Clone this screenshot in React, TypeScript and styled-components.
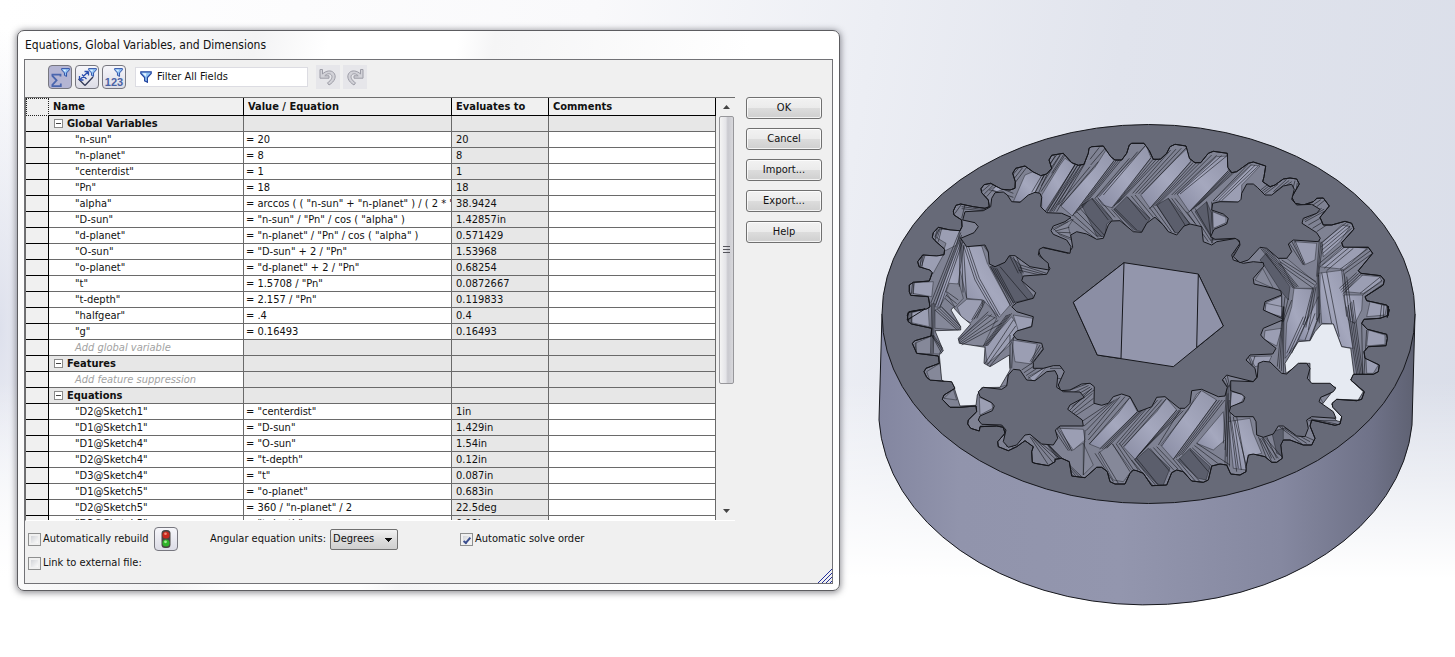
import React from 'react';
import styled, { createGlobalStyle, css } from 'styled-components';

const GlobalStyle = createGlobalStyle`
  *, *::before, *::after { box-sizing: border-box; }
  body {
    margin: 0;
    font-family: "DejaVu Sans Condensed", "Noto Sans", sans-serif;
    font-size: 11px;
    line-height: 16px;
    color: #111;
  }
  button, input, select { font: inherit; color: inherit; margin: 0; }
`;

const Desktop = styled.main`
  display: flex;
  align-items: flex-start;
  min-height: 100vh;
  background:
    linear-gradient(to bottom, transparent 58%, #fff 88%),
    radial-gradient(ellipse 60px 300px at 0 50%, #dde0ec, transparent),
    linear-gradient(100deg, #fff 0%, #f9f9fb 38%, #eceef4 56%, #e1e4ed 72%, #dadee9 100%);
`;

const Dialog = styled.section`
  flex: 0 1 823px;
  min-width: 640px;
  margin: 30px 0 0 17px;
  padding: 0 6px 6px;
  border: 1px solid #5c5c60;
  border-radius: 7px;
  background: linear-gradient(100deg, #fff 0%, #f3f3f4 26%, #fff 34%, #fff 48%, #f5f5f6 52%, #fff 80%);
  box-shadow: 0 1px 6px 1px rgba(40, 40, 50, 0.5);
`;

const Title = styled.h1`
  margin: 0;
  padding: 6px 1px;
  font-size: 12px;
  line-height: 16px;
  font-weight: normal;
`;

const Frame = styled.div`
  border: 1px solid #727276;
  background: #f0f0f0;
  height: 525px;
  display: flex;
  flex-direction: column;
`;

const Toolbar = styled.div`
  display: flex;
  align-items: center;
  height: 37px;
  padding: 0 0 4px 23px;
`;

const ToolButton = styled.button<{ $pressed?: boolean }>`
  width: 24px;
  height: 24px;
  margin-right: 3px;
  padding: 0;
  border: 1px solid #77777f;
  border-radius: 4px;
  background: ${(p) => (p.$pressed ? '#b4b5d3' : 'linear-gradient(#f6f6fa, #dcdce6)')};
  display: grid;
  place-items: center;
`;

const HistoryButton = styled.button`
  width: 24px;
  height: 24px;
  margin-right: 3px;
  padding: 0;
  border: 0;
  background: #e6e6ea;
  display: grid;
  place-items: center;
`;

const FilterBox = styled.label`
  display: flex;
  align-items: center;
  gap: 5px;
  width: 173px;
  height: 20px;
  margin: 0 8px 0 6px;
  padding-left: 4px;
  border: 1px solid #dcdce2;
  background: #fff;
`;

const FilterInput = styled.input`
  flex: 1;
  min-width: 0;
  height: 18px;
  padding: 0;
  border: 0;
  background: transparent;
  outline: none;
  &::placeholder { color: #111; opacity: 1; }
`;

const Main = styled.div`
  display: flex;
  gap: 11px;
  padding-right: 10px;
`;

const TablePane = styled.div`
  flex: 1;
  min-width: 0;
  height: 424px;
  display: flex;
  overflow: hidden;
  border-top: 1px solid #6e6e6e;
  border-left: 1px solid #6e6e6e;
  border-bottom: 1px solid #fff;
`;

const TableClip = styled.div`
  flex: 1;
  min-width: 0;
  overflow: hidden;
`;

const Table = styled.table`
  width: 100%;
  table-layout: fixed;
  border-collapse: separate;
  border-spacing: 0;
  background: #fff;
`;

const cellBase = css`
  overflow: hidden;
  white-space: nowrap;
  text-align: left;
  border-right: 1px solid #6a6a6a;
  border-bottom: 1px solid #6a6a6a;
`;

const HeadCell = styled.th`
  ${cellBase}
  height: 18px;
  padding: 1px 4px 0;
  line-height: 16px;
  background: #f0f0f0;
  border-color: #000;
`;

const CornerCell = styled(HeadCell)`
  border: 1px dotted #222;
`;

const Gutter = styled.td`
  ${cellBase}
  padding: 0;
  background: #f0f0f0;
  border-color: #000;
`;

const Cell = styled.td<{ $kind?: 'name' | 'value' | 'result'; $shaded?: boolean; $hint?: boolean }>`
  ${cellBase}
  height: 16px;
  line-height: 15px;
  padding: 0 0 0 ${(p) => (p.$kind === 'name' ? 26 : p.$kind === 'value' ? 2 : 4)}px;
  background: ${(p) => (p.$shaded ? '#e7e7e7' : '#fff')};
  ${(p) => p.$hint && 'color: #a2a2a2; font-style: italic;'}
`;

const GroupCell = styled(Cell)`
  padding-left: 5px;
  font-weight: bold;
`;

const Collapse = styled.button`
  width: 9px;
  height: 9px;
  margin: 0 4px 0 0;
  padding: 0;
  vertical-align: 0;
  border: 1px solid #8a8a8a;
  background: linear-gradient(#444, #444) center / 5px 1px no-repeat #fff;
`;

const ScrollBar = styled.div`
  flex: 0 0 19px;
  display: flex;
  flex-direction: column;
  align-items: center;
  background: #f0f0f0;
  padding: 0 1px 0 2px;
`;

const ScrollArrow = styled.button`
  width: 100%;
  height: 18px;
  padding: 0;
  border: 0;
  background: transparent;
  display: grid;
  place-items: center;
`;

const ScrollThumb = styled.div`
  width: 15px;
  height: 268px;
  border: 1px solid #97979b;
  border-radius: 2px;
  background: linear-gradient(to right, #f4f4f4, #e4e4e8 45%, #c9c9cf 60%, #d8d8dc);
  display: grid;
  place-items: center;
`;

const ScrollSpace = styled.div`
  flex: 1;
`;

const Actions = styled.div`
  flex: 0 0 76px;
  display: flex;
  flex-direction: column;
  gap: 9px;
`;

const PushButton = styled.button`
  height: 22px;
  padding: 0;
  border: 1px solid #707070;
  border-radius: 3px;
  background: linear-gradient(#f2f2f2 0%, #ebebeb 48%, #dcdcdc 52%, #cfcfcf 100%);
  box-shadow: inset 0 0 0 1px rgba(255, 255, 255, 0.75);
`;

const Options = styled.div`
  flex: 1;
  display: grid;
  grid-template-columns: 126px 56px 250px 1fr auto;
  grid-template-rows: 24px 24px;
  align-items: center;
  padding: 6px 0 0 3px;
`;

const Check = styled.label`
  display: flex;
  align-items: center;
  gap: 2px;
  white-space: nowrap;
`;

const Tick = styled.input`
  appearance: none;
  width: 13px;
  height: 13px;
  border: 1px solid #8e8f8f;
  background: linear-gradient(135deg, #d2d4d8, #fafafa) content-box #f6f6f6;
  padding: 2px;
  display: grid;
  place-items: center;
  &:checked::after {
    content: "";
    width: 4px;
    height: 8px;
    border: solid #3c4f8f;
    border-width: 0 2px 2px 0;
    transform: rotate(40deg);
  }
`;

const Units = styled.label`
  display: flex;
  align-items: center;
  gap: 4px;
  white-space: nowrap;
`;

const UnitSelect = styled.select`
  appearance: none;
  width: 68px;
  height: 21px;
  padding: 0 2px;
  border: 1px solid #707070;
  border-radius: 2px;
  background:
    linear-gradient(135deg, #111 50%, transparent 50%) right 4px top 8px / 4px 4px no-repeat,
    linear-gradient(225deg, #111 50%, transparent 50%) right 8px top 8px / 4px 4px no-repeat,
    linear-gradient(#f2f2f2, #dcdcdc 52%, #cfcfcf);
`;

const Grip = styled.svg`
  grid-column: 5;
  grid-row: 2 / 4;
  display: block;
  align-self: end;
`;

const Viewport = styled.div`
  flex: 1;
  min-width: 300px;
`;

const Model = styled.svg`
  display: block;
  width: 100%;
  height: auto;
`;

/* ---------- table data ---------- */

type Line =
  | { group: string }
  | { hint: string }
  | { name: string; value: string; result: string };

const lines: Line[] = [
  { group: 'Global Variables' },
  { name: '"n-sun"', value: '= 20', result: '20' },
  { name: '"n-planet"', value: '= 8', result: '8' },
  { name: '"centerdist"', value: '= 1', result: '1' },
  { name: '"Pn"', value: '= 18', result: '18' },
  { name: '"alpha"', value: '= arccos ( ( "n-sun" + "n-planet" ) / ( 2 * "Pn" ) )', result: '38.9424' },
  { name: '"D-sun"', value: '= "n-sun" / "Pn" / cos ( "alpha" )', result: '1.42857in' },
  { name: '"d-planet"', value: '= "n-planet" / "Pn" / cos ( "alpha" )', result: '0.571429' },
  { name: '"O-sun"', value: '= "D-sun" + 2 / "Pn"', result: '1.53968' },
  { name: '"o-planet"', value: '= "d-planet" + 2 / "Pn"', result: '0.68254' },
  { name: '"t"', value: '= 1.5708 / "Pn"', result: '0.0872667' },
  { name: '"t-depth"', value: '= 2.157 / "Pn"', result: '0.119833' },
  { name: '"halfgear"', value: '= .4', result: '0.4' },
  { name: '"g"', value: '= 0.16493', result: '0.16493' },
  { hint: 'Add global variable' },
  { group: 'Features' },
  { hint: 'Add feature suppression' },
  { group: 'Equations' },
  { name: '"D2@Sketch1"', value: '= "centerdist"', result: '1in' },
  { name: '"D1@Sketch1"', value: '= "D-sun"', result: '1.429in' },
  { name: '"D1@Sketch4"', value: '= "O-sun"', result: '1.54in' },
  { name: '"D2@Sketch4"', value: '= "t-depth"', result: '0.12in' },
  { name: '"D3@Sketch4"', value: '= "t"', result: '0.087in' },
  { name: '"D1@Sketch5"', value: '= "o-planet"', result: '0.683in' },
  { name: '"D2@Sketch5"', value: '= 360 / "n-planet" / 2', result: '22.5deg' },
  { name: '"D3@Sketch5"', value: '= "t-depth"', result: '0.12in' },
];

const Row = ({ line }: { line: Line }) => {
  if ('group' in line) {
    return (
      <tr>
        <Gutter />
        <GroupCell $shaded>
          <Collapse aria-label={`Collapse ${line.group}`} />
          {line.group}
        </GroupCell>
        <Cell $shaded /><Cell $shaded /><Cell $shaded />
      </tr>
    );
  }
  if ('hint' in line) {
    return (
      <tr>
        <Gutter />
        <Cell $kind="name" $hint>{line.hint}</Cell>
        <Cell $shaded /><Cell $shaded /><Cell $shaded />
      </tr>
    );
  }
  return (
    <tr>
      <Gutter />
      <Cell $kind="name">{line.name}</Cell>
      <Cell $kind="value">{line.value}</Cell>
      <Cell $kind="result" $shaded>{line.result}</Cell>
      <Cell />
    </tr>
  );
};

/* ---------- icons ---------- */

const Funnel = ({ x = 0, y = 0, size = 10 }: { x?: number; y?: number; size?: number }) => (
  <g transform={`translate(${x} ${y}) scale(${size / 12})`}>
    <path d="M.8.8h10.4v1.6L7.4 6.6v4.6L4.6 9.8V6.6L.8 2.4z" fill="#8fc2f4" stroke="#2546a0" strokeWidth="1.2" />
    <path d="M2.5 2.2h4L5.6 5.4z" fill="#e4f3ff" />
  </g>
);

const SigmaIcon = () => (
  <svg width="22" height="22" viewBox="0 0 22 22">
    <path d="M11.5 10.6V8.6H3.4v1.2l4.2 4.5-4.2 4.5v1.4h8.4v-2.8" fill="none" stroke="#4a66ae" strokeWidth="1.8" />
    <Funnel x={12} y={2} size={9} />
  </svg>
);

const DimensionIcon = () => (
  <svg width="22" height="22" viewBox="0 0 22 22">
    <path d="M9 19.500l8-8.500M2.500 13l6.500 6.500" fill="none" stroke="#333a58" strokeWidth="1.3" />
    <path d="M3.500 14L12.500 5.500M3.500 14v-4M3.500 14h4M12.500 5.500h-4M12.500 5.500v4M6 8.500l4.500 4.500" fill="none" stroke="#2c4fae" strokeWidth="1.3" />
    <Funnel x={12} y={2} size={9} />
  </svg>
);

const NumbersIcon = () => (
  <svg width="22" height="22" viewBox="0 0 22 22">
    <text x="11" y="20" textAnchor="middle" fontFamily="Liberation Sans, sans-serif" fontWeight="bold" fontSize="11" fill="#4a62a4">123</text>
    <Funnel x={11} y={2} size={9} />
  </svg>
);

const UndoIcon = ({ flip }: { flip?: boolean }) => (
  <svg width="20" height="20" viewBox="0 0 20 20">
    <g transform={flip ? 'translate(20 0) scale(-1 1)' : undefined} fill="#d2d2d8" stroke="#9c9ca6" strokeWidth="1">
      <path d="M2 2.500h2.500V7C8 3.500 13 3 15.500 5.500c3.400 3.500 1.500 9-4.500 12.500l-1.500-2.200c3.800-2.300 5.600-6 3.700-8C11.500 6 8.800 6.700 6.800 8.800H11v2.400H2z" />
    </g>
  </svg>
);

const TrafficLight = () => (
  <svg width="22" height="22" viewBox="0 0 22 22">
    <rect x="6.500" y="2" width="9" height="18" rx="3.500" fill="#4a4644" />
    <circle cx="11" cy="7" r="3.600" fill="#c8281c" />
    <circle cx="10.500" cy="5.800" r="1.300" fill="#f0907c" />
    <circle cx="11" cy="15" r="3.600" fill="#2fb32a" />
    <circle cx="10.500" cy="13.800" r="1.400" fill="#a4ee92" />
  </svg>
);

/* ---------- planetary gear model ---------- */

// The outlines are stored patch by patch, three units to one user unit.
type Patch = [number, number];
const UL: Patch = [870, 110];
const UR: Patch = [1140, 110];
const LL: Patch = [870, 300];
const LR: Patch = [1140, 300];
const TOP: Patch = [1040, 130];
const BOT: Patch = [1050, 380];
const LEFT: Patch = [900, 220];

const place = ([ox, oy]: Patch, pts: string) =>
  pts.trim().split(/\s+/).map((p) => {
    const [x, y] = p.split(',').map(Number);
    return `${(ox + x / 3).toFixed(1)},${(oy + y / 3).toFixed(1)}`;
  }).join(' ');

const ringProfile = [
  place(UL, '112,630 115,607 170,597 180,590 175,560 122,556 118,545 118,525 130,517 178,513 187,488 180,480 147,470 143,455 158,435 200,438 222,434 224,418 195,392 187,382 190,368 205,352 240,360 270,362 276,350 275,330 252,315 250,303 258,286 272,282 310,290 345,295 358,290 355,270 335,248 333,236 342,224 362,220 395,238 420,240 435,235 436,215 428,190 437,175 465,168 490,186 512,197 530,192 545,175 537,150 545,136 580,130 605,158 625,166 642,163 655,130 657,115 665,110 700,108 722,140 735,150 755,150 770,130 778,105 785,100 822,100 838,122 850,148 865,148'),
  place(UR, '62,147 80,130 90,110 105,103 138,108 148,145 165,158 182,158 205,130 220,124 262,130 263,172 275,188 290,185 325,160 340,156 377,168 372,200 368,215 390,230 405,225 430,207 450,204 470,207 478,222 455,262 465,280 490,285 520,275 530,265 550,264 568,288 540,322 550,345 575,345 615,334 635,340 642,357 605,398 610,412 685,412 698,430 655,482 662,490 722,497 733,510 730,525 675,560 680,572 740,585 748,600 742,622'),
  place(LR, '745,18 745,46 720,55 672,58 665,70 682,88 740,103 742,115 738,137 685,140 672,155 675,175 718,195 715,215 700,223 640,223 632,240 673,275 665,298 650,302 590,298 576,310 578,322 605,350 600,372 585,376 515,360 510,378 525,415 515,435 490,435 450,420 430,420 422,435 427,475 410,487 395,487 375,470 340,462 325,465 318,500 318,515 300,525 272,522 260,495 240,492 215,498 205,540 190,547 155,543 130,515 110,510 95,518 80,555 35,557 10,520'),
  place(BOT, '260,272 250,270 240,280 225,312 195,312 180,305 172,275 155,262 140,262 105,293 65,288 58,245 35,235 15,238'),
  place(LL, '555,485 535,497 495,490 487,487 485,455 490,440 465,422 440,440 415,452 385,440 383,425 405,400 400,382 380,378 330,380 328,393 302,385 293,372 295,360 320,335 318,318 270,322 240,322 217,298 222,285 255,265 245,245 215,243 180,240 170,232 162,215 168,205 208,190 205,168 140,160 127,130 135,122 183,108 185,85 125,72 115,65 112,45 118,35 165,27'),
].join(' ');

const sunProfile = [
  place(LL, '490,187 520,148 515,130 440,118 430,105 440,93 485,80 490,50 440,35 425,20'),
  place(UL, '425,590 440,578 490,565 497,548 455,512 460,498 530,493 540,475 510,435 505,420 515,412 595,430 608,412 602,375 620,365 650,372 680,388 700,385 715,345 725,333 750,332 790,365 815,367 830,340 850,325'),
  place(TOP, '345,262 370,285 385,305 410,315 432,288 450,282 485,290 490,335 515,345'),
  place(UR, '230,395 290,385 300,400 275,435 280,450 310,460 340,455 370,458 372,468 340,505 342,522 400,535 422,542 425,555 375,575 370,600 425,625'),
  place(LR, '428,60 370,85 362,105 370,115 408,145 398,162 330,165 318,180 345,205 350,232 340,245 270,228 260,225 247,240 262,262 255,288 235,290 185,268 155,272 150,310 135,325 118,325 75,290 50,292 35,320'),
  place(BOT, '265,95 240,50 215,42 190,50 175,70 155,76 132,70 133,20 120,10 95,12'),
  place(LL, '600,270 572,272 565,255 583,215 570,197 550,197 520,205 490,205'),
].join(' ');

const planets = [
  place(UL, '362,290 365,265 375,248 400,246 412,255 425,275 450,277 475,255 495,247 510,250 515,262 512,290 530,308 575,310 603,322 585,335 550,348 543,362 550,373 590,390 603,410 600,430 520,412 508,418 505,435 535,460 537,480 480,470 455,452 435,437 418,437 405,457 375,470 358,462 355,425 345,405 290,410 272,385 312,368 325,350 315,338 278,330 285,305 340,302'),
  place(UR, '305,250 320,222 340,222 352,232 375,255 395,255 430,228 455,223 463,238 455,268 470,285 515,283 540,298 530,310 490,325 486,340 530,368 541,385 535,395 460,390 445,402 455,425 440,445 415,445 380,415 360,412 325,450 300,458 280,440 300,405 298,392 285,385 225,388 212,380 222,358 260,342 265,325 250,312 215,300 218,280 240,275 295,276 303,268'),
  place(LL, '415,225 430,208 450,210 470,240 495,242 530,215 555,212 563,228 560,262 580,275 630,276 643,292 600,315 593,328 605,337 637,360 640,378 570,378 556,390 563,415 550,435 515,432 480,403 465,405 440,435 415,442 400,425 408,390 395,375 335,373 325,360 330,348 367,332 373,318 365,308 330,290 325,275 340,262 395,268 410,258'),
  place(LR, '355,190 370,184 390,186 425,220 440,222 475,190 500,190 510,205 502,235 515,250 570,250 587,265 580,275 542,292 537,305 580,335 588,355 515,350 500,360 505,385 495,410 470,408 430,378 415,378 400,402 370,412 350,405 348,365 340,350 285,350 268,335 272,320 310,305 315,292 305,283 272,272 272,242 340,245 352,232'),
];

const LIGHT = 'url(#toothLight)';
const MID = '#858899';
const DARK = '#5b5e6c';
const PALE = '#9b9eb3';
const AIR = '#e6eaf2';

const faces: [Patch, string, string][] = [
  // upper ring teeth
  [UL, LIGHT, '430,275 465,195 487,186 520,197 495,247 460,275'],
  [UL, LIGHT, '515,255 570,165 585,145 615,165 528,305 515,300'],
  [UL, LIGHT, '358,240 380,228 400,238 380,245'],
  [TOP, LIGHT, '62,228 165,112 198,60 222,92 97,258'],
  [TOP, LIGHT, '172,200 290,75 318,45 333,83 218,234 188,225'],
  [TOP, LIGHT, '302,195 410,85 442,55 452,95 330,235'],
  [TOP, LIGHT, '412,192 530,80 563,78 565,122 448,245'],
  [TOP, PALE, '520,212 632,105 660,108 605,165 605,218 575,215'],
  [TOP, PALE, '518,245 560,260 565,275 520,292'],
  // sun teeth seen below them
  [TOP, DARK, '125,225 158,205 218,270 200,282 195,320 170,318'],
  [TOP, DARK, '222,238 260,200 330,265 305,305 285,300'],
  [TOP, DARK, '350,225 385,205 448,278 425,310 405,308'],
  [TOP, DARK, '465,245 500,215 515,250 512,320'],
  [TOP, MID, '40,295 100,268 85,290 95,330 60,315'],
  // left cluster
  [LEFT, PALE, '118,28 180,30 170,75 130,95 138,70 105,50'],
  [LEFT, PALE, '70,105 130,105 105,150 100,160 60,138'],
  [LEFT, PALE, '42,188 100,185 95,230 38,220'],
  [LEFT, PALE, '36,278 85,265 88,320 35,308'],
  [LEFT, MID, '45,370 95,348 125,385 118,402 50,400'],
  [LEFT, MID, '80,455 120,430 128,482 90,482'],
  [LEFT, MID, '132,535 160,508 170,540'],
  [LEFT, LIGHT, '180,50 130,190 105,260 118,262 145,215 175,190 183,130'],
  [LEFT, LIGHT, '192,78 245,78 262,130 300,200 330,255 298,292 250,240 200,235 180,150'],
  [LEFT, MID, '138,215 148,190 178,192 190,235 165,262'],
  [LEFT, PALE, '172,262 200,238 245,240 248,260 212,308 185,295'],
  [LEFT, MID, '105,270 125,260 182,318 175,330 105,325'],
  [LEFT, DARK, '270,140 300,135 330,108 362,135 370,190 400,228 398,235 340,248'],
  [LEFT, MID, '175,360 262,285 290,295 250,378 185,375'],
  [LEFT, PALE, '255,380 335,290 358,325 330,375 262,432'],
  [LEFT, PALE, '340,285 398,295 395,318 355,332'],
  [LEFT, PALE, '335,360 412,372 395,432 345,425'],
  [LEFT, PALE, '385,470 440,440 400,485'],
  // lower ring teeth
  [BOT, LIGHT, '118,192 205,100 240,52 262,95 150,205'],
  [BOT, LIGHT, '220,200 320,95 350,55 380,90 255,238'],
  [BOT, LIGHT, '332,195 415,90 440,42 455,32 500,60 370,238'],
  [BOT, LIGHT, '440,190 520,95 525,180 490,210'],
  [BOT, LIGHT, '535,125 600,115 610,160 635,220 595,230 590,270 550,265'],
  [BOT, PALE, '545,35 585,45 575,65 540,85'],
  [BOT, MID, '145,220 185,190 245,272 220,305 190,300'],
  [BOT, DARK, '255,240 295,205 360,265 340,315 320,312'],
  [BOT, DARK, '385,240 420,205 480,260 468,300 445,295'],
  [BOT, PALE, '35,145 90,150 105,185 65,212'],
  [BOT, MID, '100,190 130,255 100,285'],
  [LL, PALE, '328,292 365,308 368,325 330,345'],
  [LL, MID, '385,262 400,230 415,225 412,255'],
  [LL, PALE, '565,385 640,388 645,420 610,450'],
  // right cluster
  [UR, PALE, '218,305 258,322 258,338 220,355'],
  [UR, PALE, '462,395 530,400 525,450 492,465'],
  [UR, MID, '345,510 368,475 400,535'],
  [UR, PALE, '375,580 425,558 425,620 380,605'],
  [UR, DARK, '360,450 378,430 450,530 445,570 420,540 375,470'],
  [UR, MID, '415,445 440,445 530,520 520,535 462,535'],
  [UR, LIGHT, '462,535 520,537 500,630 478,690 435,745 440,640 455,590'],
  [UR, LIGHT, '535,490 610,480 622,600 640,715 605,710 580,642 545,640'],
  [UR, LIGHT, '475,690 535,560 535,620 520,660 508,692'],
  [UR, PALE, '615,545 660,495 720,500 725,515 670,550'],
  [UR, LIGHT, '610,555 668,555 665,600 645,640 625,630'],
  [UR, PALE, '540,470 610,408 680,415 612,478'],
  [UR, PALE, '545,400 605,345 630,350 600,395 550,440'],
  [LR, PALE, '690,5 740,18 735,45 680,50'],
  [LR, PALE, '685,90 735,105 735,133 680,138'],
  [LR, PALE, '678,175 715,195 700,220 680,220'],
  [LR, MID, '635,230 670,275 650,290'],
  [LR, PALE, '375,92 425,85 410,138 372,118'],
  [LR, PALE, '378,10 428,20 425,50 375,35'],
  [LR, PALE, '330,170 395,168 385,190 345,200'],
  [LR, MID, '540,292 575,280 550,310'],
  [LR, DARK, '395,395 430,385 430,470 410,460'],
];

// Openings that show the background through the gear.
const openings: [Patch, string][] = [
  [LL, '195,92 272,90 272,80 243,30 250,22 275,50 302,72 265,115 268,130 345,142 342,190 360,200 418,165 420,210 390,262 335,263 322,285 318,316 270,318 252,262 215,240 208,165 220,152'],
  [LR, '435,190 475,125 510,122 525,95 545,72 580,72 605,140 632,145 642,222 632,240 670,275 655,300 590,298 575,312 605,350 600,365 590,362 545,315 587,262 510,250 510,190 480,190 438,220'],
];

type Seg = [number, number, number, number];
// Edge lines fanned out evenly from one segment to another.
const bands: [Patch, Seg, Seg, number][] = [
  [UL, [428, 195, 445, 175], [430, 225, 470, 172], 3],
  [UL, [485, 247, 515, 197], [505, 250, 530, 195], 3],
  [UL, [540, 160, 560, 135], [545, 190, 582, 132], 3],
  [UL, [525, 305, 615, 165], [545, 305, 640, 165], 4],
  [UL, [335, 245, 362, 222], [350, 260, 378, 228], 3],
  [UL, [255, 310, 275, 282], [275, 325, 285, 284], 2],
  [UL, [195, 390, 208, 355], [205, 395, 215, 355], 2],
  [UL, [155, 468, 165, 436], [160, 470, 170, 436], 1],
  [UL, [375, 228, 430, 250], [365, 240, 430, 262], 2],
  [UL, [275, 290, 350, 300], [275, 296, 345, 303], 2],
  [TOP, [5, 150, 45, 78], [3, 185, 75, 75], 3],
  [TOP, [22, 245, 105, 103], [50, 245, 135, 100], 4],
  [TOP, [55, 225, 150, 110], [62, 228, 175, 95], 2],
  [TOP, [150, 88, 178, 52], [152, 105, 195, 55], 2],
  [TOP, [97, 258, 222, 92], [125, 235, 245, 88], 4],
  [TOP, [165, 205, 268, 85], [190, 195, 318, 45], 3],
  [TOP, [215, 234, 333, 83], [235, 218, 362, 85], 4],
  [TOP, [278, 190, 392, 60], [305, 192, 440, 52], 4],
  [TOP, [328, 237, 452, 95], [355, 222, 478, 100], 4],
  [TOP, [395, 195, 515, 75], [420, 192, 560, 78], 4],
  [TOP, [445, 248, 565, 122], [475, 225, 585, 125], 5],
  [TOP, [520, 212, 625, 102], [545, 212, 655, 108], 4],
  [TOP, [90, 265, 165, 325], [120, 235, 195, 318], 4],
  [TOP, [155, 205, 205, 270], [175, 205, 225, 262], 3],
  [TOP, [215, 238, 275, 305], [225, 235, 290, 300], 3],
  [TOP, [262, 200, 320, 270], [285, 195, 340, 262], 3],
  [TOP, [330, 235, 385, 305], [350, 225, 405, 308], 3],
  [TOP, [385, 205, 435, 285], [405, 205, 465, 280], 3],
  [TOP, [440, 245, 505, 335], [465, 235, 520, 330], 3],
  [TOP, [500, 215, 515, 340], [515, 215, 518, 340], 2],
  [TOP, [40, 300, 85, 275], [55, 310, 95, 325], 4],
  [UR, [362, 240, 385, 222], [375, 252, 415, 222], 4],
  [UR, [400, 245, 440, 208], [405, 250, 455, 215], 3],
  [UR, [465, 212, 452, 262], [472, 218, 462, 280], 2],
  [UR, [500, 285, 530, 268], [530, 290, 555, 270], 3],
  [UR, [492, 325, 545, 295], [495, 335, 560, 300], 3],
  [UR, [505, 345, 540, 325], [530, 365, 560, 345], 3],
  [UR, [542, 400, 620, 337], [548, 430, 635, 355], 4],
  [UR, [538, 460, 605, 405], [560, 482, 640, 415], 4],
  [UR, [600, 478, 685, 415], [615, 490, 697, 430], 3],
  [UR, [598, 535, 650, 488], [608, 552, 668, 495], 4],
  [UR, [660, 550, 722, 500], [675, 560, 732, 520], 3],
  [UR, [445, 395, 490, 465], [465, 392, 495, 462], 3],
  [UR, [362, 415, 460, 535], [385, 418, 475, 530], 5],
  [UR, [425, 450, 528, 515], [415, 460, 520, 535], 3],
  [UR, [538, 390, 530, 500], [548, 400, 535, 500], 3],
  [UR, [532, 500, 530, 630], [540, 490, 538, 640], 3],
  [UR, [425, 555, 425, 635], [455, 570, 430, 635], 4],
  [UR, [545, 488, 575, 640], [560, 485, 598, 680], 2],
  [UR, [605, 480, 620, 620], [620, 500, 640, 640], 3],
  [UR, [518, 535, 490, 645], [528, 530, 505, 660], 3],
  [UR, [215, 390, 290, 386], [225, 402, 295, 392], 2],
  [UR, [278, 440, 300, 392], [290, 455, 302, 400], 2],
  [LR, [430, 20, 412, 200], [432, 20, 430, 220], 4],
  [LR, [490, 50, 440, 160], [505, 50, 455, 160], 3],
  [LR, [540, 40, 510, 122], [525, 40, 495, 120], 2],
  [LR, [620, 20, 650, 222], [640, 0, 668, 222], 5],
  [LR, [665, 70, 668, 222], [680, 90, 672, 222], 2],
  [LR, [725, 15, 720, 55], [732, 15, 730, 50], 2],
  [LR, [325, 170, 335, 195], [345, 168, 335, 200], 2],
  [LR, [250, 240, 262, 262], [262, 228, 270, 262], 3],
  [LR, [262, 250, 255, 490], [272, 260, 268, 500], 3],
  [LR, [270, 350, 290, 515], [290, 350, 318, 505], 3],
  [LR, [360, 415, 395, 485], [375, 412, 425, 470], 4],
  [LR, [418, 380, 490, 435], [440, 385, 520, 420], 4],
  [LR, [505, 355, 590, 372], [505, 362, 590, 362], 2],
  [BOT, [60, 90, 125, 25], [75, 108, 133, 70], 4],
  [BOT, [95, 125, 185, 65], [115, 165, 210, 50], 4],
  [BOT, [115, 180, 225, 50], [118, 192, 240, 52], 2],
  [BOT, [150, 208, 262, 95], [170, 205, 280, 90], 4],
  [BOT, [200, 190, 310, 62], [222, 200, 348, 57], 4],
  [BOT, [255, 238, 380, 90], [275, 215, 400, 92], 4],
  [BOT, [325, 195, 420, 42], [335, 198, 452, 34], 2],
  [BOT, [370, 238, 500, 60], [395, 225, 525, 60], 4],
  [BOT, [135, 220, 190, 305], [148, 215, 205, 310], 2],
  [BOT, [188, 192, 240, 275], [208, 190, 265, 270], 3],
  [BOT, [245, 240, 310, 318], [260, 235, 325, 315], 3],
  [BOT, [300, 205, 360, 275], [320, 200, 385, 268], 3],
  [BOT, [370, 238, 425, 305], [388, 235, 450, 305], 3],
  [BOT, [420, 210, 475, 275], [440, 190, 540, 255], 4],
  [BOT, [530, 20, 520, 190], [538, 60, 530, 230], 3],
  [BOT, [545, 125, 565, 265], [555, 120, 590, 262], 2],
  [BOT, [625, 170, 650, 235], [650, 170, 680, 235], 3],
  [BOT, [10, 145, 55, 212], [28, 140, 65, 212], 3],
  [BOT, [-30, 165, 60, 285], [0, 200, 95, 290], 5],
  [BOT, [105, 150, 100, 285], [110, 150, 108, 285], 1],
  [LL, [540, 205, 575, 205], [565, 260, 580, 270], 3],
  [LL, [600, 270, 650, 252], [605, 320, 672, 270], 5],
  [LL, [455, 210, 485, 190], [475, 235, 520, 205], 4],
  [LL, [480, 185, 510, 135], [485, 190, 520, 145], 3],
  [LL, [330, 378, 400, 378], [330, 384, 400, 390], 2],
  [LL, [400, 380, 410, 440], [405, 390, 430, 445], 2],
  [LL, [480, 410, 535, 495], [495, 415, 600, 500], 4],
  [LL, [265, 120, 355, 35], [275, 135, 395, 70], 5],
  [LL, [345, 190, 430, 60], [360, 198, 445, 95], 3],
  [LEFT, [180, 30, 92, 250], [190, 60, 120, 262], 5],
  [LEFT, [95, 250, 92, 400], [103, 250, 100, 400], 3],
  [LEFT, [180, 60, 178, 200], [190, 75, 200, 235], 3],
  [LEFT, [112, 28, 105, 52], [120, 28, 112, 55], 2],
  [LEFT, [65, 105, 60, 138], [70, 105, 66, 140], 2],
  [LEFT, [38, 188, 34, 222], [42, 188, 40, 222], 2],
  [LEFT, [30, 278, 30, 308], [35, 275, 35, 310], 2],
  [LEFT, [48, 368, 48, 400], [44, 370, 44, 398], 1],
  [LEFT, [125, 262, 182, 320], [105, 270, 172, 330], 4],
  [LEFT, [95, 345, 125, 400], [100, 345, 128, 385], 3],
  [LEFT, [140, 215, 175, 240], [135, 235, 165, 262], 3],
  [LEFT, [192, 80, 225, 180], [205, 78, 238, 175], 3],
  [LEFT, [225, 180, 290, 292], [238, 175, 300, 285], 3],
  [LEFT, [252, 78, 270, 105], [262, 78, 272, 100], 2],
  [LEFT, [272, 140, 332, 258], [290, 145, 345, 248], 4],
  [LEFT, [330, 110, 355, 160], [350, 112, 370, 160], 3],
  [LEFT, [355, 150, 420, 165], [362, 135, 440, 160], 3],
  [LEFT, [300, 140, 385, 240], [325, 120, 400, 225], 1],
  [LEFT, [215, 300, 250, 240], [230, 295, 255, 245], 3],
  [LEFT, [250, 378, 320, 285], [262, 378, 335, 280], 4],
  [LEFT, [330, 345, 330, 445], [340, 350, 335, 445], 2],
];

const Hatch = ({ patch: [ox, oy], a, b, n }: { patch: Patch; a: Seg; b: Seg; n: number }) => {
  const steps = Array.from({ length: n }, (_, i) => (n === 1 ? 0 : i / (n - 1)));
  const d = steps.map((t) => {
    const [x1, y1, x2, y2] = a.map((v, i) => v + (b[i] - v) * t);
    return `M${ox + x1 / 3} ${oy + y1 / 3}L${ox + x2 / 3} ${oy + y2 / 3}`;
  }).join('');
  return <path d={d} />;
};

const GearModel = () => (
  <Model viewBox="840 0 615 657" role="img" aria-label="Planetary gear set">
    <defs>
      <linearGradient id="drum" x1="0" x2="1" y1="0" y2="0">
        <stop offset="0" stopColor="#8386a0" />
        <stop offset="0.15" stopColor="#9194ac" />
        <stop offset="0.45" stopColor="#9396ae" />
        <stop offset="0.75" stopColor="#8588a0" />
        <stop offset="0.92" stopColor="#6f7288" />
        <stop offset="1" stopColor="#5e6172" />
      </linearGradient>
      <linearGradient id="toothLight" x1="0" x2="1" y1="1" y2="0">
        <stop offset="0" stopColor="#888ba2" />
        <stop offset="0.5" stopColor="#a5a8be" />
        <stop offset="1" stopColor="#9295aa" />
      </linearGradient>
      <clipPath id="insideRing"><polygon points={ringProfile} /></clipPath>
    </defs>
    <g stroke="#16171c" strokeWidth="1" strokeLinejoin="round">
      <path d="M882 314L879 420A267 194 0 0 0 1412 425L1415 314Z" fill="url(#drum)" />
      <ellipse cx="1148.500" cy="314" rx="266.500" ry="189.500" fill="#676a78" />
      <polygon points={ringProfile} fill="#7f8293" />
      <g clipPath="url(#insideRing)" strokeWidth="0.700">
        <g strokeOpacity="0.600">
          {faces.map(([patch, fill, pts], i) => <polygon key={i} points={place(patch, pts)} fill={fill} />)}
        </g>
        {openings.map(([patch, pts], i) => <polygon key={i} points={place(patch, pts)} fill={AIR} />)}
        <g strokeOpacity="0.850">
          {bands.map(([patch, a, b, n], i) => <Hatch key={i} patch={patch} a={a} b={b} n={n} />)}
        </g>
      </g>
      <polygon points={ringProfile} fill="none" />
      <polygon points={sunProfile} fill="#676a78" />
      {planets.map((pts, i) => <polygon key={i} points={pts} fill="#676a78" />)}
      <polygon points="1073.300,302.300 1124,262.700 1198.300,274 1223.300,326 1173.300,366.700 1097.300,355" fill="#9396ac" />
      <polygon points="1073.300,302.300 1124,262.700 1121,358.500 1097.300,355" fill="#8b8ea4" />
      <polygon points="1198.300,274 1223.300,326 1196.700,347.500" fill="#8f92a8" />
    </g>
  </Model>
);

/* ---------- page ---------- */

export default function App() {
  return (
    <>
      <GlobalStyle />
      <Desktop>
        <Dialog aria-labelledby="dialog-title">
          <Title id="dialog-title">Equations, Global Variables, and Dimensions</Title>
          <Frame>
            <Toolbar>
              <ToolButton $pressed aria-label="Equation view"><SigmaIcon /></ToolButton>
              <ToolButton aria-label="Dimension view"><DimensionIcon /></ToolButton>
              <ToolButton aria-label="Ordered view"><NumbersIcon /></ToolButton>
              <FilterBox>
                <svg width="12" height="12" viewBox="0 0 12 12"><Funnel size={12} /></svg>
                <FilterInput aria-label="Filter" placeholder="Filter All Fields" />
              </FilterBox>
              <HistoryButton aria-label="Undo"><UndoIcon /></HistoryButton>
              <HistoryButton aria-label="Redo"><UndoIcon flip /></HistoryButton>
            </Toolbar>
            <Main>
              <TablePane>
                <TableClip>
                  <Table>
                    <colgroup>
                      <col style={{ width: 23 }} />
                      <col style={{ width: 195 }} />
                      <col style={{ width: 208 }} />
                      <col style={{ width: 97 }} />
                      <col />
                    </colgroup>
                    <thead>
                      <tr>
                        <CornerCell aria-label="Row" />
                        <HeadCell>Name</HeadCell>
                        <HeadCell>Value / Equation</HeadCell>
                        <HeadCell>Evaluates to</HeadCell>
                        <HeadCell>Comments</HeadCell>
                      </tr>
                    </thead>
                    <tbody>
                      {lines.map((line, i) => <Row key={i} line={line} />)}
                    </tbody>
                  </Table>
                </TableClip>
                <ScrollBar>
                  <ScrollArrow aria-label="Scroll up">
                    <svg width="7" height="4" viewBox="0 0 7 4"><path d="M0 4L3.500 0L7 4z" fill="#444" /></svg>
                  </ScrollArrow>
                  <ScrollThumb>
                    <svg width="7" height="8" viewBox="0 0 7 8"><path d="M0 .5h7M0 3.500h7M0 6.500h7" stroke="#55555c" /></svg>
                  </ScrollThumb>
                  <ScrollSpace />
                  <ScrollArrow aria-label="Scroll down">
                    <svg width="7" height="4" viewBox="0 0 7 4"><path d="M0 0L3.500 4L7 0z" fill="#444" /></svg>
                  </ScrollArrow>
                </ScrollBar>
              </TablePane>
              <Actions>
                <PushButton>OK</PushButton>
                <PushButton>Cancel</PushButton>
                <PushButton>Import...</PushButton>
                <PushButton>Export...</PushButton>
                <PushButton>Help</PushButton>
              </Actions>
            </Main>
            <Options>
              <Check><Tick type="checkbox" />Automatically rebuild</Check>
              <div>
                <ToolButton aria-label="Rebuild"><TrafficLight /></ToolButton>
              </div>
              <Units>
                Angular equation units:
                <UnitSelect defaultValue="Degrees">
                  <option>Degrees</option>
                  <option>Radians</option>
                </UnitSelect>
              </Units>
              <Check><Tick type="checkbox" defaultChecked />Automatic solve order</Check>
              <span />
              <Check><Tick type="checkbox" />Link to external file:</Check>
              <Grip width="15" height="15" viewBox="0 0 15 15">
                <path d="M1 15L15 1M5 15L15 5M9 15L15 9M13 15l2-2" stroke="#24309a" strokeWidth="1" />
              </Grip>
            </Options>
          </Frame>
        </Dialog>
        <Viewport><GearModel /></Viewport>
      </Desktop>
    </>
  );
}
